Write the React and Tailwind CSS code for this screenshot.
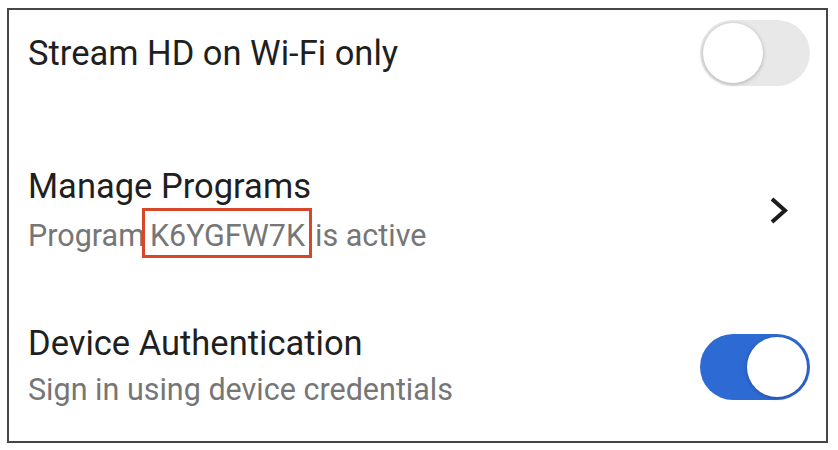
const Toggle = ({ on }) => (
    <div
        className={`flex items-center w-[110px] h-[66px] rounded-full p-[3px] ${
            on ? 'bg-[#2e6ad3] justify-end' : 'bg-[#e8e8e8] justify-start'
        }`}
    >
        <div className="w-[60px] h-[60px] rounded-full bg-white shadow-[0_1px_4px_rgba(0,0,0,0.25)]" />
    </div>
);

const Chevron = () => (
    <svg width="24" height="30" viewBox="0 0 24 30" fill="none">
        <polyline points="4,3 17,14.5 4,26" stroke="#1c1c1c" strokeWidth="4" strokeLinejoin="miter" />
    </svg>
);

export default function App() {
    return (
        <div className="w-[838px] h-[450px] bg-white pt-[8px] pl-[7px]" style={{ fontFamily: 'Roboto, "Noto Sans", sans-serif' }}>
            <div className="w-[821px] h-[435px] border-2 border-[#464646] pl-[19px] pr-[16px] flex flex-col">
                {/* Stream HD */}
                <div className="h-[85px] flex items-center justify-between">
                    <span className="text-[34.5px] leading-[40px] text-[#1f1f1f]">Stream HD on Wi-Fi only</span>
                    <Toggle on={false} />
                </div>

                {/* Manage Programs */}
                <div className="pt-[71px] flex items-center justify-between">
                    <div className="flex flex-col">
                        <span className="text-[34.5px] leading-[40px] text-[#1f1f1f]">Manage Programs</span>
                        <div className="mt-[10px] h-[40px] flex items-center text-[30.5px] text-[#767676] whitespace-nowrap">
                            <span>Program</span>
                            <span className="h-[50px] -ml-[3px] mb-[6px] pt-[6px] flex items-center border-[3px] border-[#d9472b] pl-[5px] pr-[4px]">K6YGFW7K</span>
                            <span className="ml-[3px]">is active</span>
                        </div>
                    </div>
                    <div className="mr-[18px]">
                        <Chevron />
                    </div>
                </div>

                {/* Device Authentication */}
                <div className="pt-[67px] flex items-center justify-between">
                    <div className="flex flex-col">
                        <span className="text-[34.5px] leading-[40px] text-[#1f1f1f]">Device Authentication</span>
                        <span className="mt-[7px] text-[30.5px] leading-[40px] text-[#767676]">Sign in using device credentials</span>
                    </div>
                    <Toggle on={true} />
                </div>
            </div>
        </div>
    );
}
